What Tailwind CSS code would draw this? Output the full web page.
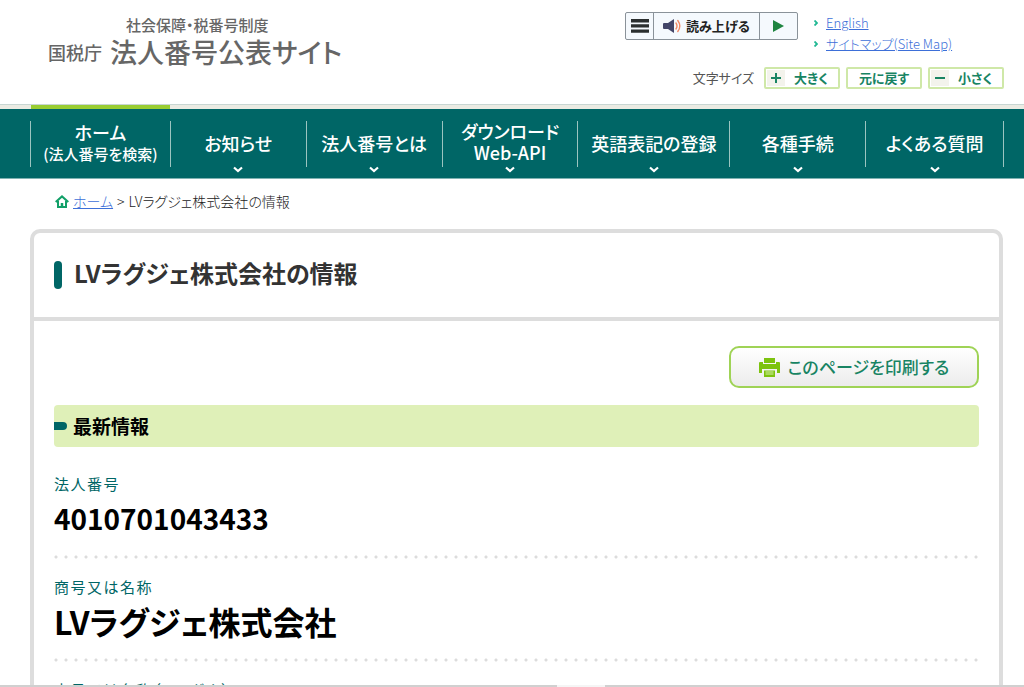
<!DOCTYPE html>
<html lang="ja">
<head>
  <meta charset="UTF-8" />
  <meta name="viewport" content="width=device-width, initial-scale=1.0" />
  <title>LVラグジェ株式会社の情報 | 国税庁法人番号公表サイト</title>
  <script src="https://cdn.jsdelivr.net/npm/@tailwindcss/browser@4"></script>
</head>
<body class="bg-white text-[#222] font-['Noto_Sans_CJK_JP',sans-serif] [font-feature-settings:'palt'] h-screen overflow-hidden">

  <!-- Header -->
  <header class="flex justify-between h-[104px] pl-12 pr-5">
    <a href="#" class="block pt-[14px] text-[#666]">
      <span class="block pl-[78px] text-[15px] leading-[22px] font-medium">社会保障・税番号制度</span>
      <span class="flex items-center gap-2 h-8">
        <span class="text-[18px] leading-8 font-medium">国税庁</span>
        <span class="text-[27px] leading-8 font-medium">法人番号公表サイト</span>
      </span>
    </a>

    <div class="flex flex-col items-end pt-3">
      <div class="flex items-start gap-4">
        <div class="flex h-7 border border-[#8a9299] rounded-xs bg-[#f5f9fd] divide-x divide-[#8a9299]">
          <button type="button" aria-label="メニュー" class="w-7 flex items-center justify-center">
            <svg width="18" height="14" viewBox="0 0 18 14" fill="#2b2f2f"><path d="M0 0h18v3.4H0zM0 5.2h18v3.4H0zM0 10.4h18v3.4H0z" /></svg>
          </button>
          <button type="button" class="w-[106px] pb-px flex items-center justify-center gap-1 text-[13px] font-bold">
            <svg width="19" height="16" viewBox="0 0 19 16" fill="none">
              <path d="M1 5h4l6-4v14l-6-4H1q-1 0-1-1V6q0-1 1-1z" fill="#434568" />
              <path d="M13 5q2 3 0 6M14.8 2.5q4 5.500 0 11" stroke="#f28a66" stroke-width="1.400" stroke-linecap="round" />
            </svg>
            読み上げる
          </button>
          <button type="button" aria-label="再生" class="w-[37px] flex items-center justify-center">
            <svg width="11" height="12" viewBox="0 0 11 12"><path d="M0 0l11 6L0 12z" fill="#1f8540" /></svg>
          </button>
        </div>
        <ul class="w-[190px] text-[13px] leading-[21px] font-light text-[#3d6fd8]">
          <li class="flex items-center gap-2">
            <svg width="4" height="6" viewBox="0 0 4 6" fill="none" stroke="#1fb893" stroke-width="1.800"><path d="M.5.5L3 3 .5 5.500" /></svg>
            <a href="#" class="underline">English</a>
          </li>
          <li class="flex items-center gap-2">
            <svg width="4" height="6" viewBox="0 0 4 6" fill="none" stroke="#1fb893" stroke-width="1.800"><path d="M.5.5L3 3 .5 5.500" /></svg>
            <a href="#" class="underline">サイトマップ(Site Map)</a>
          </li>
        </ul>
      </div>

      <div class="flex items-center gap-[6px] mt-[13px]">
        <span class="mr-1 text-[13px] leading-5 text-[#555]">文字サイズ</span>
        <button type="button" class="flex items-center w-[76px] h-[22px] p-px border-2 border-[#cfe8a8] rounded-xs text-[13px] font-bold text-[#188463]">
          <span class="w-[18px] h-4 bg-[#f3f3ec] flex items-center justify-center">
            <svg width="10" height="10" viewBox="0 0 10 10" fill="#188463"><path d="M4 0h2v4h4v2H6v4H4V6H0V4h4z" /></svg>
          </span>
          <span class="grow">大きく</span>
        </button>
        <button type="button" class="w-[76px] h-[22px] border-2 border-[#cfe8a8] rounded-xs text-[13px] leading-4 font-bold text-[#188463]">元に戻す</button>
        <button type="button" class="flex items-center w-[76px] h-[22px] p-px border-2 border-[#cfe8a8] rounded-xs text-[13px] font-bold text-[#188463]">
          <span class="w-[18px] h-4 bg-[#f3f3ec] flex items-center justify-center">
            <svg width="10" height="2" viewBox="0 0 10 2" fill="#188463"><path d="M0 0h10v2H0z" /></svg>
          </span>
          <span class="grow">小さく</span>
        </button>
      </div>
    </div>
  </header>

  <!-- Global navigation -->
  <div class="h-[5px] pl-[31px] border-t border-[#c8d6d3] bg-[#ebebe3]">
    <div class="w-[139px] h-1 bg-[#9acd32]"></div>
  </div>
  <nav class="h-[70px] pl-[30px] pr-5 py-3 bg-[#006666] border-b border-[#7fb2b2] text-white text-[18px] font-medium">
    <ul class="grid grid-cols-[140fr_136fr_136fr_136fr_152fr_136fr_137fr] h-[46px] border-l border-r border-[#9cc4c0] divide-x divide-[#9cc4c0] text-center whitespace-nowrap">
      <li class="h-[46px]">
        <a href="#" class="block leading-[22px]">ホーム<span class="block text-[15px] leading-[22px]">(法人番号を検索)</span></a>
      </li>
      <li class="h-[46px]">
        <a href="#" class="flex flex-col items-center gap-px"><span class="h-11 leading-[44px]">お知らせ</span>
          <svg width="10" height="7" viewBox="0 0 10 7" fill="none" stroke="#fff" stroke-width="2.200"><path d="M1 1.500l4 3.500 4-3.500" /></svg></a>
      </li>
      <li class="h-[46px]">
        <a href="#" class="flex flex-col items-center gap-px"><span class="h-11 leading-[44px]">法人番号とは</span>
          <svg width="10" height="7" viewBox="0 0 10 7" fill="none" stroke="#fff" stroke-width="2.200"><path d="M1 1.500l4 3.500 4-3.500" /></svg></a>
      </li>
      <li class="h-[46px]">
        <a href="#" class="flex flex-col items-center gap-px"><span class="h-11 leading-[21px]">ダウンロード<br />Web-API</span>
          <svg width="10" height="7" viewBox="0 0 10 7" fill="none" stroke="#fff" stroke-width="2.200"><path d="M1 1.500l4 3.500 4-3.500" /></svg></a>
      </li>
      <li class="h-[46px]">
        <a href="#" class="flex flex-col items-center gap-px"><span class="h-11 leading-[44px]">英語表記の登録</span>
          <svg width="10" height="7" viewBox="0 0 10 7" fill="none" stroke="#fff" stroke-width="2.200"><path d="M1 1.500l4 3.500 4-3.500" /></svg></a>
      </li>
      <li class="h-[46px]">
        <a href="#" class="flex flex-col items-center gap-px"><span class="h-11 leading-[44px]">各種手続</span>
          <svg width="10" height="7" viewBox="0 0 10 7" fill="none" stroke="#fff" stroke-width="2.200"><path d="M1 1.500l4 3.500 4-3.500" /></svg></a>
      </li>
      <li class="h-[46px]">
        <a href="#" class="flex flex-col items-center gap-px"><span class="h-11 leading-[44px]">よくある質問</span>
          <svg width="10" height="7" viewBox="0 0 10 7" fill="none" stroke="#fff" stroke-width="2.200"><path d="M1 1.500l4 3.500 4-3.500" /></svg></a>
      </li>
    </ul>
  </nav>

  <!-- Breadcrumb -->
  <div class="flex items-center gap-1 h-[50px] pl-[55px] pb-[6px] text-[14px] leading-5 font-light">
    <svg width="14" height="13" viewBox="0 0 14 13" fill="none" stroke="#12a068" stroke-width="2"><path d="M.7 7L7 1.400 13.300 7M3 6v6h8V6" /><path d="M7 12V8" stroke-width="2.500" /></svg>
    <a href="#" class="text-[#3d6fd8] underline">ホーム</a>
    <span>&gt;</span>
    <span>LVラグジェ株式会社の情報</span>
  </div>

  <!-- Corporate information -->
  <main class="ml-[30px] mr-[21px] border-4 border-[#ddd] rounded-[10px]">
    <div class="flex items-center gap-3 h-[88px] pl-5 border-b-4 border-[#ddd]">
      <span class="w-2 h-7 rounded-full bg-[#006666]"></span>
      <h1 class="pb-1 text-[24px] leading-8 font-bold text-[#333]">LVラグジェ株式会社の情報</h1>
    </div>

    <div class="px-5 pt-[25px]">
      <div class="flex justify-end">
        <button type="button" class="flex items-center justify-center gap-2 w-[250px] h-[42px] border-2 border-[#9fd356] rounded-[10px] bg-linear-to-b from-white to-[#ececec] text-[17px] font-medium text-[#188463]">
          <svg width="21" height="19" viewBox="0 0 21 19" fill="#7dc30f">
            <path d="M5 0h11v5H5z" />
            <path d="M0 5q0-1 1-1h3v2h13V4h3q1 0 1 1v10h-3v-4H3v4H0z" />
            <path d="M5 12.500h11V19H5z" />
            <path d="M6.500 14h8M6.500 16h8" stroke="#d9efb0" />
          </svg>
          このページを印刷する
        </button>
      </div>

      <h2 class="flex items-center gap-[6px] h-[42px] mt-[17px] rounded-sm bg-[#dff0b8] text-[19px] font-bold text-black">
        <span class="w-[13px] h-2 rounded-r-full bg-[#006666]"></span>
        最新情報
      </h2>

      <dl>
        <div class="h-[113px] pt-[27px]">
          <dt class="text-[15px] leading-5 tracking-widest text-[#006666]">法人番号</dt>
          <dd class="h-12 text-[28px] leading-[48px] font-bold text-black">4010701043433</dd>
          <div class="h-1 mt-[13px] bg-[radial-gradient(circle_at_2px_2px,#dcdcdc_1px,transparent_2px)] bg-[length:10px_4px]"></div>
        </div>
        <div class="h-[103px] pt-[17px]">
          <dt class="text-[15px] leading-5 tracking-widest text-[#006666]">商号又は名称</dt>
          <dd class="h-12 text-[32px] leading-[48px] font-bold text-black">LVラグジェ株式会社</dd>
          <div class="h-1 mt-[13px] bg-[radial-gradient(circle_at_2px_2px,#dcdcdc_1px,transparent_2px)] bg-[length:10px_4px]"></div>
        </div>
        <div class="h-[103px] pt-[17px]">
          <dt class="text-[15px] leading-5 tracking-widest text-[#006666]">商号又は名称（フリガナ）</dt>
        </div>
      </dl>
    </div>
  </main>

  <!-- Line along the window's bottom edge -->
  <div class="fixed inset-x-0 bottom-0 flex h-[2px]">
    <div class="grow-[557] bg-[#d0d0d0]"></div>
    <div class="grow-[48] bg-[#f5f5f5]"></div>
    <div class="grow-[419] bg-[#d0d0d0]"></div>
  </div>

</body>
</html>
